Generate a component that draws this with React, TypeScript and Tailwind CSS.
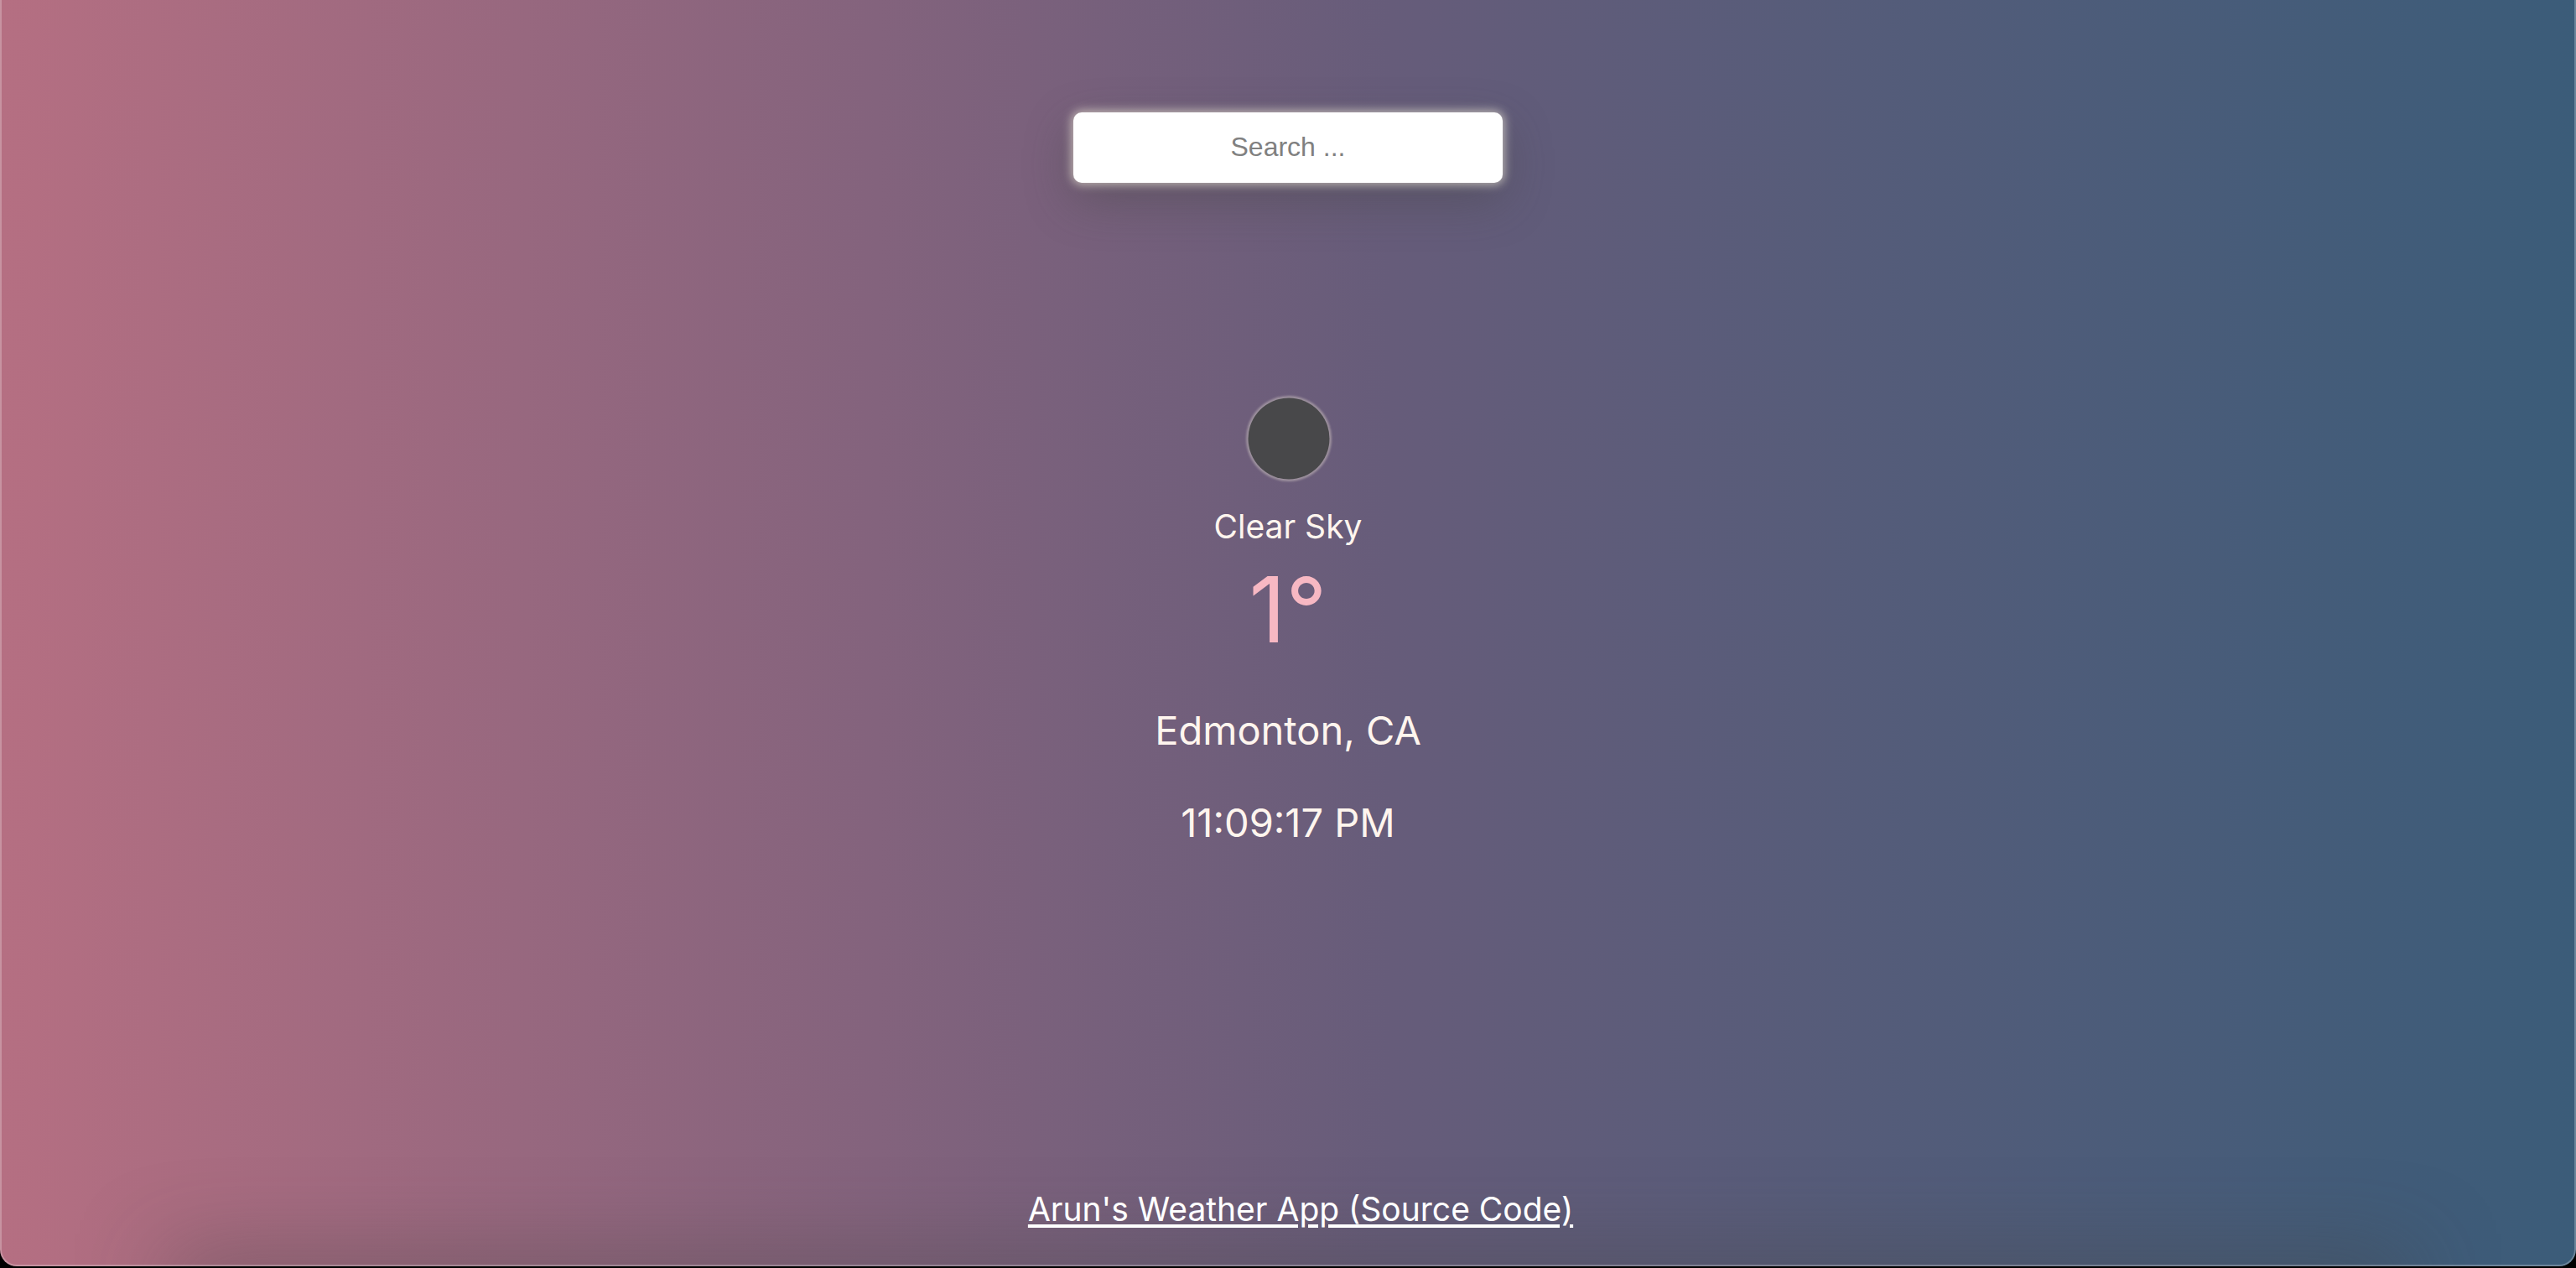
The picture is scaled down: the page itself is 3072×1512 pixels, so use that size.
import React from "react";

function SearchBar() {
  return (
    <form className="flex justify-center pt-[134px]" onSubmit={(e) => e.preventDefault()}>
      <input
        type="text"
        aria-label="Search"
        placeholder="Search ..."
        className="h-[84px] w-[512px] rounded-[10px] bg-white pb-0.5 text-center font-['Liberation_Sans',Arial,sans-serif] text-[32px] text-[#333333] shadow-[0_0_12px_2px_rgba(245,240,220,0.65),0_20px_56px_0_rgba(66,66,66,0.42)] outline-none placeholder:text-[#808080]"
      />
    </form>
  );
}

function ClearNightIcon() {
  return (
    <svg className="size-[200px]" viewBox="0 0 200 200" role="img" aria-label="Clear night">
      <defs>
        <filter id="ring" x="-10%" y="-10%" width="120%" height="120%">
          <feGaussianBlur stdDeviation="1" />
        </filter>
      </defs>
      <circle cx="101" cy="100" r="51" fill="#9d919e" filter="url(#ring)" />
      <circle cx="101" cy="100" r="48.5" fill="#48484a" />
    </svg>
  );
}

export default function App() {
  return (
    <div className="bg-black pb-0.5 font-[Inter,sans-serif]">
      <div className="relative flex min-h-[calc(100vh-2px)] flex-col overflow-hidden rounded-b-[20px] bg-linear-to-r/srgb from-[#b56f82] via-[#665c7a] via-54% to-[#3b5c79]">
        <div className="pointer-events-none absolute inset-x-[210px] -bottom-10 h-10 shadow-[0_0_100px_10px_rgba(66,66,66,0.5)]" />
        <SearchBar />
        <main className="flex flex-col items-center pt-[205px] text-[#fff5ee]">
          <ClearNightIcon />
          <p className="-mt-[20px] text-[39px] leading-[50px]">Clear Sky</p>
          <p className="mt-[14px] text-[108px] leading-[120px] text-[#f7b8c3]">1°</p>
          <h1 className="mt-[54px] text-[47px] leading-[60px]">Edmonton, CA</h1>
          <time className="mt-[50px] text-[47px] leading-[60px]">11:09:17 PM</time>
        </main>
        <footer className="relative mt-auto flex justify-center pb-[38px] pl-[30px]">
          <a
            href="#source"
            className="text-[39px] leading-[60px] text-white underline decoration-[4px] underline-offset-[4px]"
          >
            Arun&apos;s Weather App (Source Code)
          </a>
        </footer>
        <div className="pointer-events-none absolute inset-0 rounded-b-[20px] border-x-2 border-b-2 border-white/25" />
      </div>
    </div>
  );
}
